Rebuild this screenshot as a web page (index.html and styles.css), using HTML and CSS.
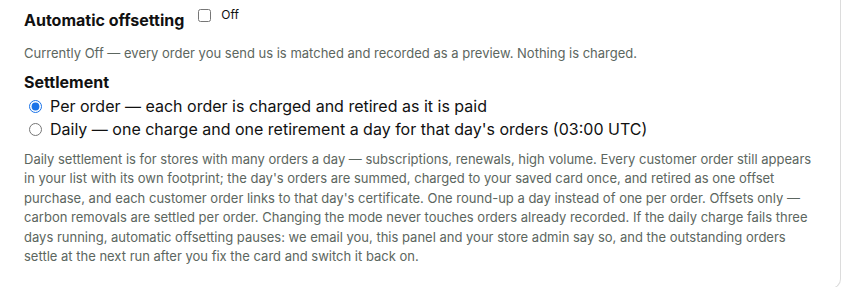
FILE: index.html
```html
<html lang="en">
<head>
    <meta charset="UTF-8">
    <meta name="viewport" content="width=device-width, initial-scale=1.0">
    <title>Offsetting</title>
    <link rel="stylesheet" href="styles.css">
</head>
<body>
    <div class="panel">
        <div class="toggle-row">
            <h2 class="panel-title">Automatic offsetting</h2>
            <label class="toggle">
                <input type="checkbox" class="toggle-box">
                <span class="toggle-label">Off</span>
            </label>
        </div>
        <p class="hint">Currently Off — every order you send us is matched and recorded as a preview. Nothing is charged.</p>

        <h2 class="panel-title settle-title">Settlement</h2>
        <div class="mode-list">
            <label class="mode">
                <input type="radio" name="mode" checked>
                <span>Per order — each order is charged and retired as it is paid</span>
            </label>
            <label class="mode">
                <input type="radio" name="mode">
                <span>Daily — one charge and one retirement a day for that day's orders (03:00 UTC)</span>
            </label>
        </div>
        <p class="hint detail">Daily settlement is for stores with many orders a day — subscriptions, renewals, high volume. Every customer order still appears in your list with its own footprint; the day's orders are summed, charged to your saved card once, and retired as one offset purchase, and each customer order links to that day's certificate. One round-up a day instead of one per order. Offsets only — carbon removals are settled per order. Changing the mode never touches orders already recorded. If the daily charge fails three days running, automatic offsetting pauses: we email you, this panel and your store admin say so, and the outstanding orders settle at the next run after you fix the card and switch it back on.</p>
    </div>
</body>
</html>
```

FILE: styles.css
```css
body {
    margin: 0px;
    font-family: Inter, "Noto Sans", sans-serif;
    color: #111;
}

.panel {
    width: 841px;
    height: 289px;
    box-sizing: border-box;
    border-right: 1px solid #dcdcdc;
    border-bottom: 1px solid #dcdcdc;
    border-bottom-right-radius: 10px;
    padding: 9px 24px 0px 24px;
}

.toggle-row {
    display: flex;
    align-items: flex-start;
}

.panel-title {
    margin: 0px;
    font-size: 16px;
    font-weight: 700;
    line-height: 22px;
}

.toggle {
    display: flex;
    align-items: flex-start;
    margin-left: 14px;
}

.toggle-box {
    width: 13px;
    height: 13px;
    margin: 0px;
}

.toggle-label {
    font-size: 12px;
    line-height: 12px;
    margin-left: 10px;
}

.hint {
    margin: 0px;
    font-size: 13px;
    line-height: 19.5px;
    color: #5c6660;
}

.toggle-row + .hint {
    margin-top: 13px;
}

.settle-title {
    margin-top: 7px;
}

.mode-list {
    display: flex;
    flex-direction: column;
    padding-left: 5px;
    margin-top: 2px;
}

.mode {
    display: flex;
    align-items: center;
    font-size: 16px;
    line-height: 23px;
}

.mode input {
    width: 13px;
    height: 13px;
    margin: 0px 8px 0px 0px;
    accent-color: #1a73e8;
}

.detail {
    margin-top: 9px;
    width: 792px;
}
```
